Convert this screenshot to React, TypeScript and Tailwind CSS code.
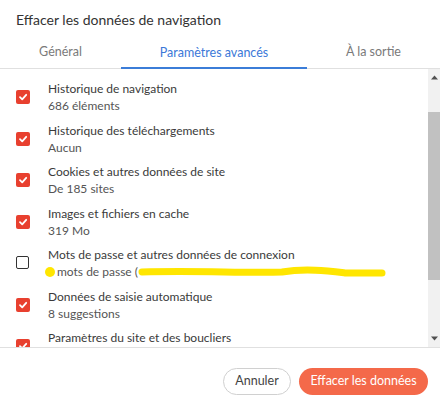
import React from "react";

type Item = { title: string; sub: string; checked: boolean; redacted?: boolean };

const items: Item[] = [
  { title: "Historique de navigation", sub: "686 éléments", checked: true },
  { title: "Historique des téléchargements", sub: "Aucun", checked: true },
  { title: "Cookies et autres données de site", sub: "De 185 sites", checked: true },
  { title: "Images et fichiers en cache", sub: "319 Mo", checked: true },
  { title: "Mots de passe et autres données de connexion", sub: "mots de passe (", checked: false, redacted: true },
  { title: "Données de saisie automatique", sub: "8 suggestions", checked: true },
  { title: "Paramètres du site et des boucliers", sub: "", checked: true },
];

function Check({ checked }: { checked: boolean }) {
  if (!checked) {
    return <div className="w-[13px] h-[13px] border-[1.5px] border-[#333] rounded-[2px] bg-white" />;
  }
  return (
    <div className="w-[14px] h-[14px] rounded-[2px] bg-[#e8402f] flex items-center justify-center">
      <svg width="10" height="10" viewBox="0 0 10 10">
        <path d="M2 5.2 L4.2 7.3 L8.2 2.8" fill="none" stroke="white" strokeWidth="1.8" strokeLinecap="round" strokeLinejoin="round" />
      </svg>
    </div>
  );
}

export default function App() {
  return (
    <div className="w-[440px] h-[405px] bg-white flex flex-col overflow-hidden" style={{ fontFamily: "Lato, 'Noto Sans', sans-serif" }}>
      <div className="h-[40px] pl-[16px] pt-[11px] text-[14px] text-[#333] leading-[18px]">Effacer les données de navigation</div>
      <div className="h-[29px] flex border-b border-[#e0e0e0] text-[12.5px]">
        <div className="w-[121px] flex items-center justify-center text-[#7a7a7a] pb-[3px]">Général</div>
        <div className="w-[186px] flex items-center justify-center text-[#3b78d8] border-b-2 border-[#3b7dd8] mb-[-1px]">Paramètres avancés</div>
        <div className="flex-1 flex items-center justify-center text-[#7a7a7a] pb-[3px]">À la sortie</div>
      </div>
      <div className="h-[279px] flex border-b border-[#e0e0e0]">
        <div className="flex-1 overflow-hidden pt-[12px]">
          {items.map((it, i) => (
            <div key={i} className="h-[41.5px] flex shrink-0">
              <div className="w-[48px] pl-[16px] pt-[9px] shrink-0">
                <Check checked={it.checked} />
              </div>
              <div className="flex flex-col">
                <div className="text-[12px] leading-[16px] text-[#3a3a3a] whitespace-nowrap">{it.title}</div>
                {it.redacted ? (
                  <div className="relative h-[17px] text-[12px] leading-[17px] text-[#555] whitespace-nowrap pl-[9px]">
                    {it.sub}
                    <svg className="absolute left-[-4px] top-0" width="345" height="17" viewBox="0 0 345 17">
                      <circle cx="6" cy="9" r="5" fill="#ffe600" />
                      <path d="M98 9 C 150 7.5, 200 10, 238 9 C 262 5, 285 8, 302 10 L 338 10" fill="none" stroke="#ffe600" strokeWidth="7" strokeLinecap="round" />
                    </svg>
                  </div>
                ) : (
                  <div className="text-[12px] leading-[17px] text-[#555] whitespace-nowrap">{it.sub}</div>
                )}
              </div>
            </div>
          ))}
        </div>
        <div className="w-[12px] bg-[#f1f1f1] flex flex-col shrink-0">
          <div className="h-[17px] flex items-center justify-center">
            <svg width="7" height="5" viewBox="0 0 7 5"><path d="M0 4.5 L3.5 0.5 L7 4.5 Z" fill="#505050" /></svg>
          </div>
          <div className="h-[26px]" />
          <div className="h-[168px] bg-[#c1c1c1]" />
          <div className="flex-1" />
          <div className="h-[17px] flex items-center justify-center">
            <svg width="7" height="5" viewBox="0 0 7 5"><path d="M0 0.5 L7 0.5 L3.5 4.5 Z" fill="#505050" /></svg>
          </div>
        </div>
      </div>
      <div className="flex justify-end gap-[8px] pr-[12px] pt-[20px]">
        <button className="w-[68px] h-[27px] rounded-full border border-[#d0d0d0] bg-white text-[12.5px] text-[#444]">Annuler</button>
        <button className="w-[129px] h-[27px] rounded-full bg-[#f4694a] text-[12.5px] text-white">Effacer les données</button>
      </div>
    </div>
  );
}
